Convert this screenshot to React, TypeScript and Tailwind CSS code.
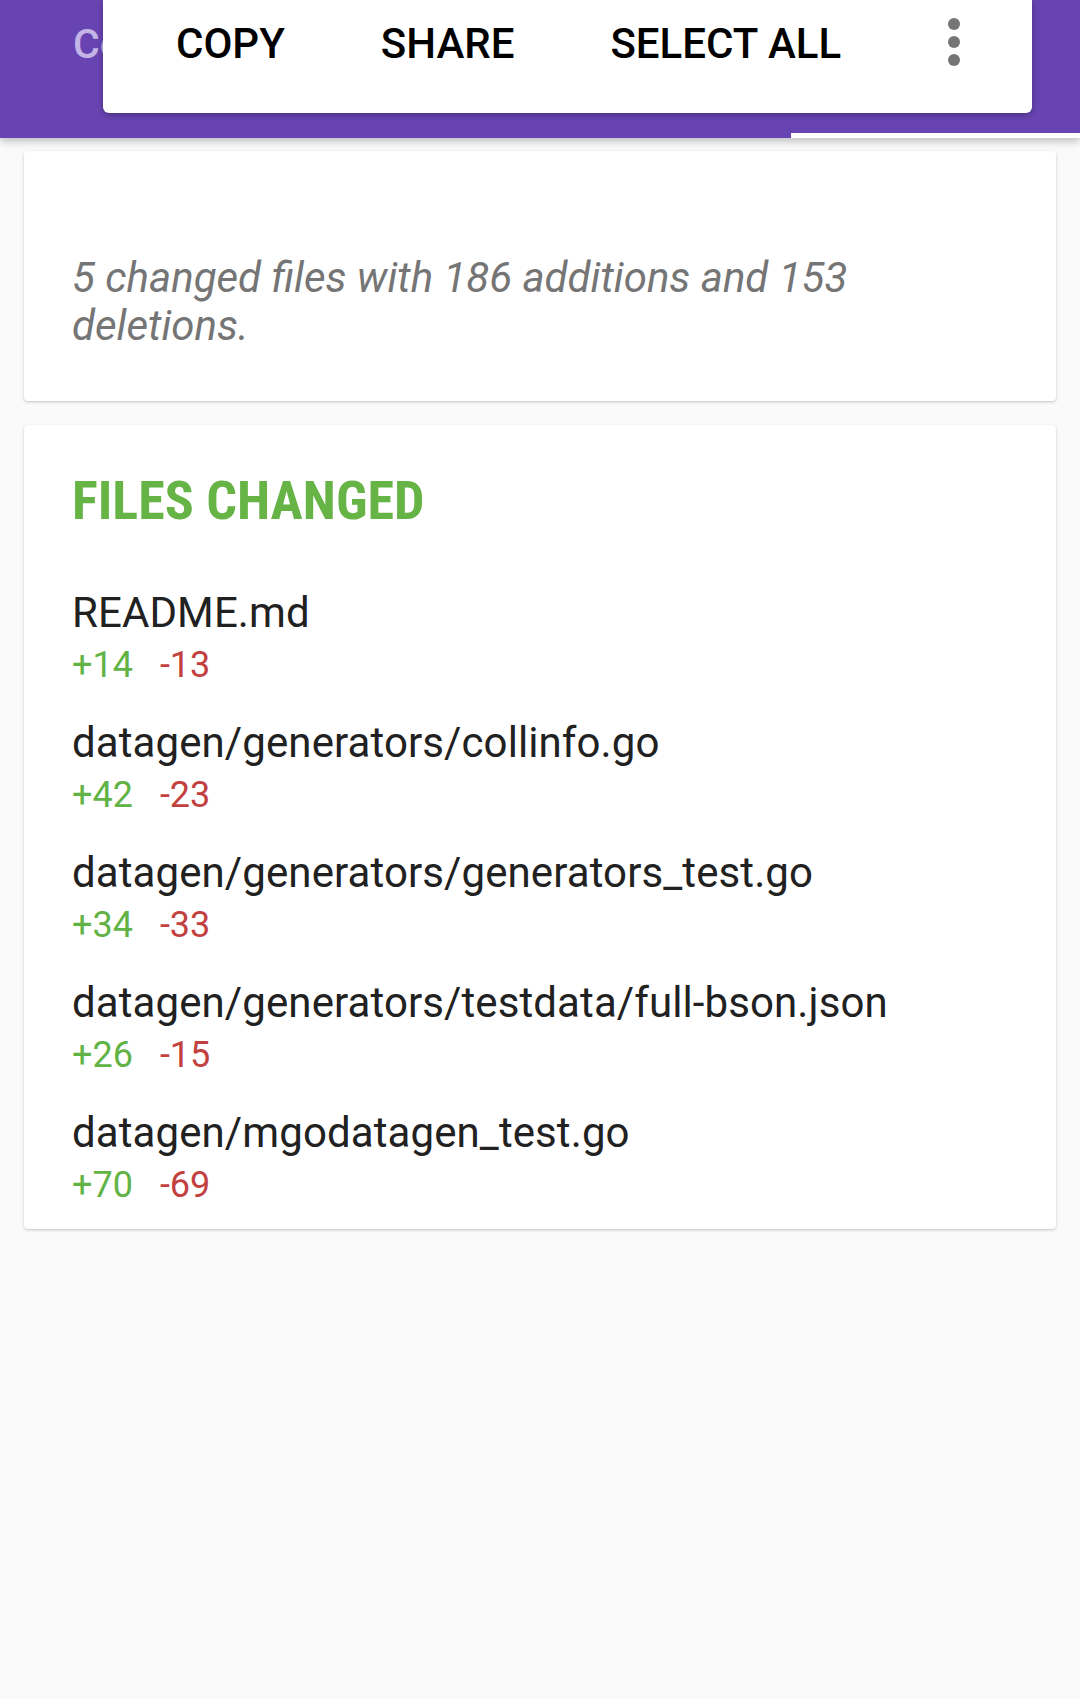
import React from 'react';

const files = [
  { name: 'README.md', add: 14, del: 13 },
  { name: 'datagen/generators/collinfo.go', add: 42, del: 23 },
  { name: 'datagen/generators/generators_test.go', add: 34, del: 33 },
  { name: 'datagen/generators/testdata/full-bson.json', add: 26, del: 15 },
  { name: 'datagen/mgodatagen_test.go', add: 70, del: 69 },
];

function ActionPopup() {
  return (
    <div className="absolute left-[103px] top-0 w-[929px] h-[113px] bg-white rounded-b-[6px] shadow-[0_2px_6px_rgba(0,0,0,0.3)] flex items-start pt-[20px] pl-[73px] pr-[72px]">
      <div className="flex gap-[96px] text-[42px] leading-[48px] font-medium text-black">
        <span>COPY</span>
        <span>SHARE</span>
        <span>SELECT ALL</span>
      </div>
      <svg className="ml-auto mt-[-2px]" width="12" height="48" viewBox="0 0 12 48">
        <circle cx="6" cy="6" r="6" fill="#757575" />
        <circle cx="6" cy="24" r="6" fill="#757575" />
        <circle cx="6" cy="42" r="6" fill="#757575" />
      </svg>
    </div>
  );
}

export default function App() {
  return (
    <div
      className="min-h-[1699px] bg-[#fafafa]"
      style={{ fontFamily: 'Roboto, "Noto Sans", sans-serif' }}
    >
      <div className="relative h-[138px] bg-[#6844b2] shadow-[0_3px_8px_rgba(0,0,0,0.25)] z-10">
        <div className="pt-[20px] ml-[73px] w-[30px] overflow-hidden whitespace-nowrap text-[41px] leading-[48px] font-medium text-[#c4b5e6]">
          Commit
        </div>
        <div className="absolute right-0 bottom-0 w-[289px] h-[5px] bg-white" />
        <ActionPopup />
      </div>

      <div className="px-[24px] pt-[13px] flex flex-col gap-[24px]">
        <div className="bg-white rounded-[4px] shadow-[0_1px_3px_rgba(0,0,0,0.22)] px-[48px] pt-[103px] pb-[51px]">
          <p className="italic text-[42px] leading-[48px] text-[#757575]">
            5 changed files with 186 additions and 153 deletions.
          </p>
        </div>

        <div className="bg-white rounded-[4px] shadow-[0_1px_3px_rgba(0,0,0,0.22)] px-[48px] pt-[44px] pb-[22px]">
          <h2
            className="text-[54px] leading-[64px] font-bold text-[#66b346]"
            style={{ fontFamily: '"Roboto Condensed", "Liberation Sans Narrow", Roboto, sans-serif' }}
          >
            FILES CHANGED
          </h2>
          <div className="mt-[52px] flex flex-col gap-[28px]">
            {files.map((f) => (
              <div key={f.name}>
                <div className="text-[42px] leading-[56px] tracking-[0.1px] text-[#212121]">{f.name}</div>
                <div className="mt-[2px] flex gap-[27px] text-[36px] leading-[44px]">
                  <span className="text-[#62b346]">+{f.add}</span>
                  <span className="text-[#c2413f]">-{f.del}</span>
                </div>
              </div>
            ))}
          </div>
        </div>
      </div>
    </div>
  );
}
